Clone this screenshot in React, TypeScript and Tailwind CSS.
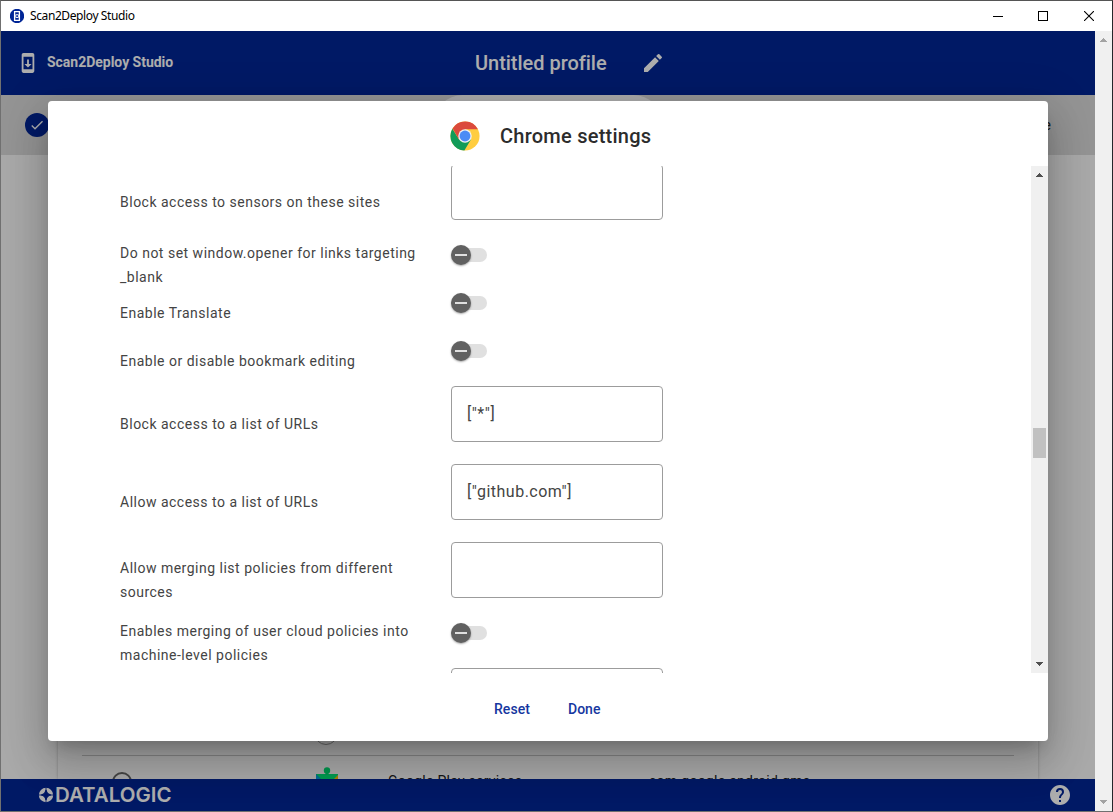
import React from "react";

type Row = { label: string; kind: "toggle" | "field"; value?: string };

const rows: Row[] = [
  { label: "Block access to sensors on these sites", kind: "field" },
  { label: "Do not set window.opener for links targeting _blank", kind: "toggle" },
  { label: "Enable Translate", kind: "toggle" },
  { label: "Enable or disable bookmark editing", kind: "toggle" },
  { label: "Block access to a list of URLs", kind: "field", value: '["*"]' },
  { label: "Allow access to a list of URLs", kind: "field", value: '["github.com"]' },
  { label: "Allow merging list policies from different sources", kind: "field" },
  { label: "Enables merging of user cloud policies into machine-level policies", kind: "toggle" },
  { label: "", kind: "field" },
];

function Toggle() {
  return (
    <div className="flex h-5 w-9 items-center rounded-full">
      <div className="z-10 flex size-5 shrink-0 items-center justify-center rounded-full bg-[#616161] shadow-[0_1px_2px_rgba(0,0,0,0.35)]">
        <div className="h-0.5 w-3 bg-[#e0e0e0]" />
      </div>
      <div className="-ml-[18px] h-3.5 w-[34px] shrink-0 rounded-full bg-[#e0e0e0]" />
    </div>
  );
}

function SettingRow({ label, kind, value }: Row) {
  return kind === "toggle" ? (
    <div className="flex h-12 shrink-0">
      <div className="flex w-[331px] items-center pr-[26px] leading-6">{label}</div>
      <div className="pt-1">
        <Toggle />
      </div>
    </div>
  ) : (
    <div className="flex h-[78px] shrink-0">
      <div className="flex w-[331px] items-center pr-[26px] leading-6">{label}</div>
      <div className="mt-px flex h-14 w-[212px] items-center rounded border border-[#9c9c9c] px-[15px] text-base tracking-[0.5px]">
        {value}
      </div>
    </div>
  );
}

function Arrow({ down, color }: { down?: boolean; color: string }) {
  return (
    <svg width="7" height="4" viewBox="0 0 7 4" shapeRendering="crispEdges" fill={color}>
      {down ? <path d="M0 0h7v1h-1v1h-1v1h-1v1h-1v-1h-1v-1h-1v-1h-1z" /> : <path d="M0 4h7v-1h-1v-1h-1v-1h-1v-1h-1v1h-1v1h-1v1h-1z" />}
    </svg>
  );
}

function ChromeLogo() {
  return (
    <svg width="30" height="30" viewBox="0 0 48 48">
      <circle cx="24" cy="24" r="23.3" fill="#ffcd40" />
      <path d="M24 24 33.5 29.5 23 47.3A23.3 23.3 0 0 1 3.8 12.3L14.5 29.5Z" fill="#129b58" />
      <path d="M24 13.2H44.7A23.3 23.3 0 0 0 4.1 11.8L14.5 29.5 24 24Z" fill="#db4a3c" />
      <circle cx="24" cy="24" r="10.8" fill="#f1f1f1" />
      <circle cx="24" cy="24" r="8.7" fill="#4c8bf5" />
    </svg>
  );
}

function TitleBar() {
  return (
    <div className="flex h-[30px] shrink-0 items-center bg-white pl-[9px] font-['Noto_Sans',sans-serif] text-xs text-black">
      <svg width="14" height="14" viewBox="0 0 14 14">
        <circle cx="7" cy="7" r="7.2" fill="#002596" />
        <path d="M4.6 2.7h4.8v8.6H4.6z" fill="none" stroke="#fff" strokeWidth="1.3" />
        <path d="M5.8 5.7h2.6v2.8H5.8z" fill="none" stroke="#fff" strokeWidth="0.9" />
      </svg>
      <span className="ml-1.5 tracking-[-0.4px]">Scan2Deploy Studio</span>
      <div className="ml-auto flex items-center pr-[18px]">
        <svg width="10" height="10" viewBox="0 0 10 10" shapeRendering="crispEdges"><path d="M0 5.5h10" stroke="#000" /></svg>
        <svg className="ml-[35px]" width="10" height="10" viewBox="0 0 10 10" shapeRendering="crispEdges"><path d="M.5.5h9v9h-9z" fill="none" stroke="#000" /></svg>
        <svg className="ml-9" width="10" height="10" viewBox="0 0 10 10"><path d="M0 0 10 10M10 0 0 10" stroke="#000" strokeWidth="1.1" /></svg>
      </div>
    </div>
  );
}

function Page() {
  return (
    <div className="flex h-full flex-col">
      <header className="flex h-16 shrink-0 items-center bg-[#002596] pl-[14.5px] text-white">
        <svg className="size-6" viewBox="0 0 24 24" fill="#fff">
          <path d="M17 1.01 7 1c-1.1 0-2 .9-2 2v18c0 1.1.9 2 2 2h10c1.1 0 2-.9 2-2V3c0-1.1-.9-1.99-2-1.99zM17 19H7V5h10v14zm-1-6h-3V8h-2v5H8l4 4 4-4z" transform="translate(1.2 1.2) scale(.9)" />
        </svg>
        <span className="ml-[7.5px] w-[428px] pb-0.5 text-sm font-bold tracking-[-0.02px]">Scan2Deploy Studio</span>
        <span className="text-xl font-medium tracking-[-0.03px]">Untitled profile</span>
        <svg className="ml-[34.5px] size-6" viewBox="0 0 24 24" fill="#fff">
          <path d="M3 17.25V21h3.75L17.81 9.94l-3.75-3.75L3 17.25zM20.71 7.04a1 1 0 0 0 0-1.41l-2.34-2.34a1 1 0 0 0-1.41 0l-1.83 1.83 3.75 3.75 1.83-1.83z" />
        </svg>
      </header>
      <div className="flex h-[60px] shrink-0 items-center bg-[#dadada] pl-6">
        <div className="flex size-6 items-center justify-center rounded-full bg-[#002596]">
          <svg width="16" height="16" viewBox="0 0 24 24" fill="#fff"><path d="M9 16.2 4.8 12l-1.4 1.4L9 19 21 7l-1.4-1.4z" /></svg>
        </div>
        <div className="ml-[384px] h-[60px] w-[230px] rounded-full bg-[#fafafa]" />
        <span className="ml-auto pr-[44px] text-sm text-[#222]">e</span>
      </div>
      <main className="flex min-h-0 flex-1 flex-col bg-[#fafafa] px-[57px]">
        <div className="mt-6 flex flex-1 flex-col justify-end bg-[#fafafa] px-6 shadow-[0_0_3px_rgba(0,0,0,0.25)]">
          <div className="flex h-12 items-end pb-2.5 pl-[232px]">
            <div className="size-6 rounded-full border border-[#999]" />
          </div>
          <div className="flex h-6 items-start overflow-hidden border-t border-[#c4c4c4] text-sm tracking-[0.25px] text-[#222]">
            <div className="ml-[30px] mt-4 size-5 shrink-0 rounded-full border-2 border-[#666]" />
            <svg className="ml-[184px] mt-[11px] shrink-0" width="22" height="22" viewBox="0 0 22 22">
              <path d="M0 7h22v15H0z" fill="#00e676" />
              <path d="M0 7 5 12 0 17z" fill="#0096d6" />
              <path d="M0 8 4 12H0z" fill="#00a5e0" />
              <path d="M22 8 18 12h4z" fill="#ffc107" />
              <circle cx="11" cy="3.5" r="3.2" fill="#00dc70" />
              <path d="M9.5 5h3v3h-3z" fill="#00dc70" />
            </svg>
            <span className="ml-[50px] mt-[15px] w-[261px] shrink-0">Google Play services</span>
            <span className="mt-[15px] shrink-0">com.google.android.gms</span>
          </div>
        </div>
      </main>
      <footer className="flex h-8 shrink-0 items-center bg-[#002596] pl-[37px] pr-[23px]">
        <svg width="138" height="24" viewBox="0 -3 138 24" fill="#fff">
          <circle cx="8" cy="9" r="7.2" />
          <path d="M8 4.2Q8.8 8.2 12.8 9Q8.8 9.8 8 13.8Q7.2 9.8 3.2 9Q7.2 8.2 8 4.2z" fill="#002596" stroke="#002596" strokeWidth="1.2" />
          <path d="M8 1v16M0 9h16" stroke="#002596" strokeWidth="0.9" />
          <text x="17" y="16.2" fontFamily="Inter, sans-serif" fontWeight="600" fontSize="20.5" textLength="116.5" lengthAdjust="spacingAndGlyphs">DATALOGIC</text>
        </svg>
        <svg className="ml-auto size-6" viewBox="0 0 24 24" fill="#fff">
          <path d="M12 2C6.48 2 2 6.48 2 12s4.48 10 10 10 10-4.48 10-10S17.52 2 12 2zm1 17h-2v-2h2v2zm2.07-7.75-.9.92C13.45 12.9 13 13.5 13 15h-2v-.5c0-1.1.45-2.1 1.17-2.83l1.24-1.26c.37-.36.59-.86.59-1.41a2 2 0 1 0-4 0H8a4 4 0 1 1 8 0c0 .88-.36 1.68-.93 2.25z" />
        </svg>
      </footer>
    </div>
  );
}

function Dialog() {
  return (
    <section className="flex h-[640px] w-[1000px] flex-col rounded bg-white shadow-[0_11px_15px_-7px_rgba(0,0,0,0.2),0_24px_38px_3px_rgba(0,0,0,0.14),0_9px_46px_8px_rgba(0,0,0,0.12)]">
      <div className="flex h-[65px] shrink-0 items-center pl-[402px] pt-[5px]">
        <ChromeLogo />
        <h1 className="ml-5 text-xl font-medium tracking-[0.25px] text-[#2c2c2c]">Chrome settings</h1>
      </div>
      <div className="flex h-[507px] shrink-0 overflow-hidden">
        <div className="-mt-[3px] flex flex-1 flex-col pl-[72px] text-sm tracking-[0.5px] text-[#444]">
          {rows.map((r, i) => (
            <SettingRow key={i} {...r} />
          ))}
        </div>
        <div className="flex w-[17px] flex-col items-center bg-[#f0f0f0] py-[7px]">
          <Arrow color="#505050" />
          <div className="mb-auto mt-[251px] h-[30px] w-[13px] bg-[#c1c1c1]" />
          <Arrow down color="#505050" />
        </div>
      </div>
      <div className="flex h-[68px] items-center gap-[38px] pl-[446px] pt-1 text-sm font-medium tracking-[0.05px] text-[#1637a0]">
        <span>Reset</span>
        <span>Done</span>
      </div>
    </section>
  );
}

export default function App() {
  return (
    <div className="flex h-[812px] w-[1113px] flex-col overflow-hidden border border-[#707070] border-r-[#25272b] border-t-[#555] font-[Roboto,sans-serif]">
      <TitleBar />
      <div className="flex min-h-0 flex-1">
        <div className="relative w-[1094px] overflow-hidden">
          <Page />
          <div className="absolute inset-0 bg-black/32 pl-[47px] pt-[70px]">
            <Dialog />
          </div>
        </div>
        <div className="flex w-[17px] flex-col items-center justify-between bg-[#f0f0f0] py-[7px]">
          <Arrow color="#a3a3a3" />
          <Arrow down color="#a3a3a3" />
        </div>
      </div>
    </div>
  );
}
